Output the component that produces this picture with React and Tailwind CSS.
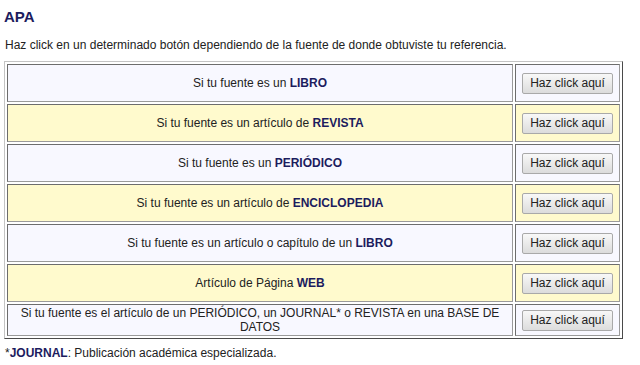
const rows = [
  { lead: 'Si tu fuente es un ', strong: 'LIBRO', tone: 'plain' },
  { lead: 'Si tu fuente es un artículo de ', strong: 'REVISTA', tone: 'warm' },
  { lead: 'Si tu fuente es un ', strong: 'PERIÓDICO', tone: 'plain' },
  { lead: 'Si tu fuente es un artículo de ', strong: 'ENCICLOPEDIA', tone: 'warm' },
  { lead: 'Si tu fuente es un artículo o capítulo de un ', strong: 'LIBRO', tone: 'plain' },
  { lead: 'Artículo de Página ', strong: 'WEB', tone: 'warm' },
]

const toneBg = {
  plain: 'bg-[#f8f8ff]',
  warm: 'bg-[#fffacd]',
}

function ClickButton() {
  return (
    <button
      type="button"
      className="h-[21px] w-[91px] rounded-[2px] border border-[#a9a9a9] bg-gradient-to-b from-[#f8f8f8] to-[#dcdcdc] text-[12px] leading-none text-[#222]"
    >
      Haz click aquí
    </button>
  )
}

const cellBorder = 'border border-t-[#6d6d6d] border-l-[#6d6d6d] border-b-[#9a9a9a] border-r-[#9a9a9a]'

export default function App() {
  return (
    <div className="min-h-[365px] bg-white px-[4px] pt-[8px] font-['Liberation_Sans',Arial,sans-serif] text-[12px] text-[#222]">
      <h2 className="text-[15px] font-bold leading-[18px] text-[#1c1c5e]">APA</h2>
      <p className="mt-[12px] pl-[1px] leading-[14px]">
        Haz click en un determinado botón dependiendo de la fuente de donde obtuviste tu referencia.
      </p>

      <table className="mt-[9px] w-[619px] border-separate border-spacing-[2px] border border-t-[#c4c4c4] border-l-[#c4c4c4] border-b-[#4a4a4a] border-r-[#4a4a4a]">
        <tbody>
          {rows.map((row, i) => (
            <tr key={i}>
              <td className={`h-[38px] w-[506px] px-[4px] text-center align-middle ${cellBorder} ${toneBg[row.tone]}`}>
                {row.lead}
                <b className="text-[#1c1c5e]">{row.strong}</b>
              </td>
              <td className={`h-[38px] text-center align-middle ${cellBorder} ${toneBg[row.tone]}`}>
                <ClickButton />
              </td>
            </tr>
          ))}
          <tr>
            <td className={`w-[506px] px-[8px] py-[1px] text-center align-middle leading-[14px] ${cellBorder} bg-[#f8f8ff]`}>
              Si tu fuente es el artículo de un PERIÓDICO, un JOURNAL* o REVISTA en una BASE DE DATOS
            </td>
            <td className={`py-[3px] text-center align-middle ${cellBorder} bg-[#f8f8ff]`}>
              <ClickButton />
            </td>
          </tr>
        </tbody>
      </table>

      <p className="mt-[7px] pl-[1px] leading-[14px]">
        *<b className="text-[#1c1c5e]">JOURNAL</b>: Publicación académica especializada.
      </p>
    </div>
  )
}
